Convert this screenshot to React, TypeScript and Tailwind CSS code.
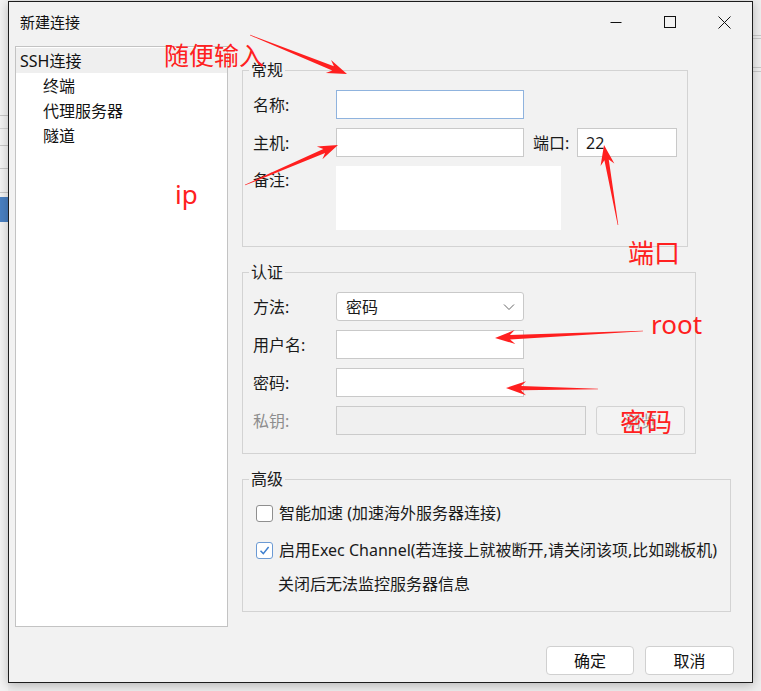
import React from "react";

const FONT = "font-['Noto_Sans','Noto_Sans_CJK_SC',sans-serif]";

function Arrow({ t, p, head = 20, hw = 7, s = 2.2 }: { t: [number, number]; p: [number, number]; head?: number; hw?: number; s?: number }) {
  const dx = p[0] - t[0];
  const dy = p[1] - t[1];
  const len = Math.hypot(dx, dy);
  const ux = dx / len;
  const uy = dy / len;
  const nx = -uy;
  const ny = ux;
  const bx = p[0] - ux * head;
  const by = p[1] - uy * head;
  const ix = p[0] - ux * (head - 5);
  const iy = p[1] - uy * (head - 5);
  const pts = [
    [t[0] + nx * 0.3, t[1] + ny * 0.3],
    [ix + nx * s, iy + ny * s],
    [bx + nx * hw, by + ny * hw],
    [p[0], p[1]],
    [bx - nx * hw, by - ny * hw],
    [ix - nx * s, iy - ny * s],
    [t[0] - nx * 0.3, t[1] - ny * 0.3],
  ]
    .map((q) => q.join(","))
    .join(" ");
  return <polygon points={pts} fill="#ff1f1f" />;
}

function Label({ children, gray }: { children: React.ReactNode; gray?: boolean }) {
  return (
    <div className={`w-[83px] shrink-0 text-[16px] leading-[20px] ${gray ? "text-[#8d8d8d]" : "text-[#1a1a1a]"}`}>
      {children}
    </div>
  );
}

function Input({ w, focus, children }: { w: string; focus?: boolean; children?: React.ReactNode }) {
  return (
    <div
      className={`${w} h-[29px] bg-white border ${focus ? "border-[#8fb3de]" : "border-[#c9c9c9]"} flex items-center px-[8px] text-[16px] text-[#1a1a1a]`}
    >
      {children}
    </div>
  );
}

function Group({ title, w, children, pt, pb }: { title: string; w: string; children: React.ReactNode; pt: string; pb: string }) {
  return (
    <fieldset className={`${w} border border-[#d3d3d3] ${pt} ${pb} px-0`}>
      <legend className="ml-[6px] px-[2px] text-[16px] leading-[20px] text-[#1a1a1a]">{title}</legend>
      <div className="pl-[10px] pr-[10px]">{children}</div>
    </fieldset>
  );
}

function Checkbox({ checked }: { checked?: boolean }) {
  return (
    <div
      className={`w-[17px] h-[17px] rounded-[3px] border bg-white flex items-center justify-center ${checked ? "border-[#6b9ad4]" : "border-[#8f8f8f]"}`}
    >
      {checked && (
        <svg width="13" height="13" viewBox="0 0 13 13">
          <path d="M2.5 6.8 L5.3 9.6 L10.6 3" fill="none" stroke="#3d7fcf" strokeWidth="1.5" />
        </svg>
      )}
    </div>
  );
}

export default function App() {
  return (
    <div className={`relative w-[761px] h-[691px] overflow-hidden bg-[#eeeeee] ${FONT}`}>
      {/* background app hints */}
      <div className="absolute left-0 top-0 w-[8px] h-[691px] bg-[#f3f3f3]">
        <div className="h-[115px]" />
        <div className="h-px bg-[#c8c8c8]" />
        <div className="h-[12px]" />
        <div className="h-px bg-[#d4d4d4]" />
        <div className="h-[16px]" />
        <div className="h-px bg-[#c8c8c8]" />
        <div className="h-[22px]" />
        <div className="h-px bg-[#c8c8c8]" />
        <div className="h-[23px]" />
        <div className="h-px bg-[#c8c8c8]" />
        <div className="h-[4px]" />
        <div className="h-[25px] bg-[#4a80c2]" />
      </div>
      <div className="absolute right-0 top-0 w-[9px] h-[691px] bg-[#efefef]">
        <div className="h-[35px]" />
        <div className="h-px bg-[#c9c9c9]" />
        <div className="h-[2px]" />
        <div className="h-px bg-[#c9c9c9]" />
        <div className="h-[28px]" />
        <div className="h-px bg-[#c9c9c9]" />
        <div className="h-[3px]" />
        <div className="h-px bg-[#c9c9c9]" />
      </div>

      {/* dialog window */}
      <div className="absolute left-[8px] top-[1px] w-[745px] h-[682px] border border-[#1d1d1d] bg-[#f2f2f2] shadow-[0_2px_10px_rgba(0,0,0,0.25)] flex flex-col">
        {/* title bar */}
        <div className="h-[40px] shrink-0 flex items-center pl-[11px]">
          <span className="text-[15px] leading-[20px] text-[#111]">新建连接</span>
          <div className="ml-auto flex items-center h-full">
            <div className="w-[54px] flex justify-center">
              <svg width="12" height="12" viewBox="0 0 12 12">
                <path d="M0.5 6.5 H11.5" stroke="#111" strokeWidth="1" />
              </svg>
            </div>
            <div className="w-[54px] flex justify-center">
              <svg width="12" height="12" viewBox="0 0 12 12">
                <rect x="0.5" y="0.5" width="11" height="11" fill="none" stroke="#111" strokeWidth="1" />
              </svg>
            </div>
            <div className="w-[54px] mr-[1px] flex justify-center">
              <svg width="13" height="13" viewBox="0 0 13 13">
                <path d="M0.5 0.5 L12.5 12.5 M12.5 0.5 L0.5 12.5" stroke="#111" strokeWidth="1" />
              </svg>
            </div>
          </div>
        </div>

        {/* body */}
        <div className="flex pl-[6px] pt-[4px]">
          {/* tree panel */}
          <div className="w-[213px] h-[581px] shrink-0 bg-white border border-[#c3c3c3] pt-px">
            <div className="h-[25px] bg-[#efefef] flex items-center pl-[4px] text-[16px] text-[#111]">SSH连接</div>
            <div className="h-[25px] flex items-center pl-[27px] text-[16px] text-[#111]">终端</div>
            <div className="h-[25px] flex items-center pl-[27px] text-[16px] text-[#111]">代理服务器</div>
            <div className="h-[25px] flex items-center pl-[27px] text-[16px] text-[#111]">隧道</div>
          </div>

          {/* right column */}
          <div className="ml-[14px] pt-[14px] flex flex-col">
            <Group title="常规" w="w-[446px]" pt="pt-[10px]" pb="pb-[16px]">
              <div className="flex flex-col gap-[9px]">
                <div className="flex items-center">
                  <Label>名称:</Label>
                  <Input w="w-[188px]" focus />
                </div>
                <div className="flex items-center">
                  <Label>主机:</Label>
                  <Input w="w-[188px]" />
                  <span className="ml-[9px] w-[44px] text-[16px] leading-[20px] text-[#1a1a1a]">端口:</span>
                  <Input w="w-[100px]">22</Input>
                </div>
                <div className="flex items-start">
                  <div className="pt-[4px] shrink-0">
                    <Label>备注:</Label>
                  </div>
                  <div className="w-[225px] h-[64px] bg-white" />
                </div>
              </div>
            </Group>

            <div className="h-[15px]" />

            <Group title="认证" w="w-[453px]" pt="pt-[10px]" pb="pb-[18px]">
              <div className="flex flex-col gap-[9px]">
                <div className="flex items-center">
                  <Label>方法:</Label>
                  <div className="w-[188px] h-[29px] bg-white border border-[#c9c9c9] rounded-[3px] flex items-center pl-[9px] pr-[8px] text-[16px] text-[#1a1a1a]">
                    <span>密码</span>
                    <svg className="ml-auto" width="12" height="8" viewBox="0 0 12 8">
                      <path d="M1 1.5 L6 6.5 L11 1.5" fill="none" stroke="#666" strokeWidth="1" />
                    </svg>
                  </div>
                </div>
                <div className="flex items-center">
                  <Label>用户名:</Label>
                  <Input w="w-[188px]" />
                </div>
                <div className="flex items-center">
                  <Label>密码:</Label>
                  <Input w="w-[188px]" />
                </div>
                <div className="flex items-center">
                  <Label gray>私钥:</Label>
                  <div className="w-[250px] h-[29px] bg-[#f0f0f0] border border-[#cbcbcb]" />
                  <div className="ml-[10px] w-[89px] h-[29px] bg-[#f3f3f3] border border-[#d3d3d3] rounded-[3px] flex items-center justify-center text-[16px] text-[#9a9a9a]">
                    浏览
                  </div>
                </div>
              </div>
            </Group>

            <div className="h-[15px]" />

            <Group title="高级" w="w-[489px]" pt="pt-[12px]" pb="pb-[15px]">
              <div className="flex flex-col pl-[3px]">
                <div className="h-[24px] flex items-center gap-[6px]">
                  <Checkbox />
                  <span className="text-[16px] text-[#1a1a1a]">智能加速 (加速海外服务器连接)</span>
                </div>
                <div className="h-[13px]" />
                <div className="h-[24px] flex items-center gap-[6px]">
                  <Checkbox checked />
                  <span className="text-[16px] text-[#1a1a1a]">启用Exec Channel(若连接上就被断开,请关闭该项,比如跳板机)</span>
                </div>
                <div className="h-[10px]" />
                <div className="h-[24px] flex items-center pl-[22px]">
                  <span className="text-[16px] text-[#1a1a1a]">关闭后无法监控服务器信息</span>
                </div>
              </div>
            </Group>
          </div>
        </div>

        {/* buttons */}
        <div className="mt-[19px] flex justify-end pr-[18px] gap-[11px]">
          <div className="w-[88px] h-[29px] bg-white border border-[#d0d0d0] rounded-[4px] flex items-center justify-center text-[16px] text-[#111]">确定</div>
          <div className="w-[89px] h-[29px] bg-white border border-[#d0d0d0] rounded-[4px] flex items-center justify-center text-[16px] text-[#111]">取消</div>
        </div>
      </div>

      {/* red annotations overlay */}
      <svg className="absolute left-0 top-0 pointer-events-none" width="761" height="691" viewBox="0 0 761 691">
        <Arrow t={[250, 35]} p={[347, 74]} />
        <Arrow t={[245, 185]} p={[338, 145]} />
        <Arrow t={[618, 225]} p={[604, 145]} />
        <Arrow t={[643, 331]} p={[495, 338]} />
        <Arrow t={[598, 389]} p={[506, 388]} />
      </svg>
      <span className="absolute left-[164px] top-[38px] text-[25px] leading-[34px] text-[#ff2020] pointer-events-none">随便输入</span>
      <span className="absolute left-[175px] top-[177px] text-[26px] leading-[34px] text-[#ff2020] pointer-events-none">ip</span>
      <span className="absolute left-[628px] top-[236px] text-[26px] leading-[34px] text-[#ff2020] pointer-events-none">端口</span>
      <span className="absolute left-[651px] top-[307px] text-[26px] leading-[34px] text-[#ff2020] pointer-events-none">root</span>
      <span className="absolute left-[620px] top-[405px] text-[26px] leading-[34px] text-[#ff2020] pointer-events-none">密码</span>
    </div>
  );
}
